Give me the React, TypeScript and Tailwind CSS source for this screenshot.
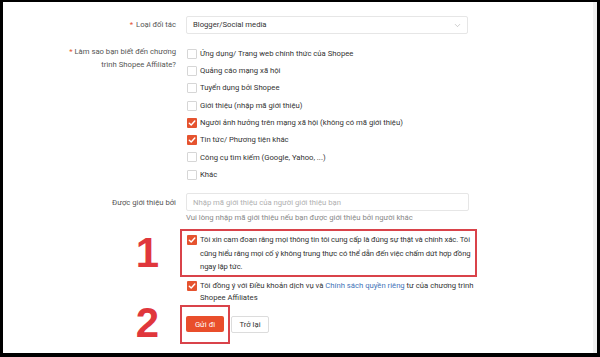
import { ChevronDown } from 'lucide-react'

const SOURCES: { label: string; checked: boolean }[] = [
  { label: 'Ứng dụng/ Trang web chính thức của Shopee', checked: false },
  { label: 'Quảng cáo mạng xã hội', checked: false },
  { label: 'Tuyển dụng bởi Shopee', checked: false },
  { label: 'Giới thiệu (nhập mã giới thiệu)', checked: false },
  { label: 'Người ảnh hưởng trên mạng xã hội (không có mã giới thiệu)', checked: true },
  { label: 'Tin tức/ Phương tiện khác', checked: true },
  { label: 'Công cụ tìm kiếm (Google, Yahoo, ...)', checked: false },
  { label: 'Khác', checked: false },
]

function Box({ checked }: { checked: boolean }) {
  if (checked) {
    return (
      <span className="flex h-[10px] w-[10px] shrink-0 items-center justify-center rounded-[1px] bg-[#e5532f]">
        <svg width="8" height="8" viewBox="0 0 8 8" fill="none">
          <path d="M1.3 4.2 3.2 6 6.8 2" stroke="white" strokeWidth="1.4" strokeLinecap="round" strokeLinejoin="round" />
        </svg>
      </span>
    )
  }
  return <span className="h-[10px] w-[10px] shrink-0 rounded-[1px] border border-[#d6d6d6] bg-white" />
}

export default function App() {
  return (
    <div className="flex h-[357px] w-[600px] bg-black pb-[4px] pl-[3px] pr-[3px] pt-[2px] font-['Roboto','Liberation_Sans',sans-serif] text-[7.7px] text-[#444]">
      <div className="flex-1 bg-white">
        <div className="mt-[14px] grid grid-cols-[173px_1fr] gap-x-[10px]">
          {/* loai doi tac */}
          <div className="flex h-[18px] items-center justify-end">
            <span className="text-[#e5532f]">*</span>
            <span className="ml-[3px] text-[#555]">Loại đối tác</span>
          </div>
          <div className="flex h-[18px] w-[282px] items-center justify-between rounded-[2px] border border-[#e6e6e6] pl-[6px] pr-[5px] text-[#333]">
            <span>Blogger/Social media</span>
            <ChevronDown size={9} strokeWidth={1.5} className="text-[#aaa]" />
          </div>

          {/* how did you know */}
          <div className="mt-[11px] text-right leading-[13px] text-[#555]">
            <span className="text-[#e5532f]">*</span> Làm sao bạn biết đến chương
            <br />
            trình Shopee Affiliate?
          </div>
          <div className="mt-[11px] flex flex-col">
            {SOURCES.map((s) => (
              <label key={s.label} className="flex h-[17.3px] items-center gap-[3px] pl-[1px] text-[#333]">
                <Box checked={s.checked} />
                <span>{s.label}</span>
              </label>
            ))}
          </div>

          {/* referral */}
          <div className="mt-[10px] flex h-[18px] items-center justify-end text-[#555]">Được giới thiệu bởi</div>
          <div className="mt-[10px] flex flex-col">
            <div className="flex h-[18px] w-[283px] items-center rounded-[2px] border border-[#e6e6e6] pl-[6px] text-[#b0b0b0]">
              Nhập mã giới thiệu của người giới thiệu bạn
            </div>
            <p className="mt-[1px] leading-[12px] text-[#888]">
              Vui lòng nhập mã giới thiệu nếu bạn được giới thiệu bởi người khác
            </p>
          </div>

          {/* confirm */}
          <div className="mt-[5px] flex justify-end pr-[17px] pt-[3px]">
            <span className="font-['Liberation_Sans',sans-serif] text-[42px] font-bold leading-[42px] text-[#e0373c]">1</span>
          </div>
          <div className="mt-[5px] -ml-[6px] flex w-[297px] gap-[3px] border-2 border-[#d9434a] pb-[1.5px] pl-[5px] pt-[2px] leading-[13.5px] text-[#333]">
            <span className="mt-[2px]">
              <Box checked />
            </span>
            <span className="whitespace-nowrap tracking-[-0.1px]">
              Tôi xin cam đoan rằng mọi thông tin tôi cung cấp là đúng sự thật và chính xác. Tôi
              <br />
              cũng hiểu rằng mọi cố ý không trung thực có thể dẫn đến việc chấm dứt hợp đồng
              <br />
              ngay lập tức.
            </span>
          </div>

          <div />
          <div className="mt-[3px] flex gap-[3px] pl-[1px] leading-[12px] text-[#333]">
            <span className="mt-[1px]">
              <Box checked />
            </span>
            <span className="whitespace-nowrap">
              Tôi đồng ý với Điều khoản dịch vụ và <span className="text-[#3f73b8]">Chính sách quyền riêng</span> tư
              của chương trình
              <br />
              Shopee Affiliates
            </span>
          </div>

          {/* actions */}
          <div className="-mt-[2px] flex justify-end pr-[17px]">
            <span className="font-['Liberation_Sans',sans-serif] text-[42px] font-bold leading-[42px] text-[#e0373c]">2</span>
          </div>
          <div className="-ml-[6px] flex items-center">
            <div className="flex h-[39px] w-[50px] items-center border-2 border-[#d9434a] pl-[4px]">
              <button type="button" className="h-[16px] w-[38px] rounded-[2px] bg-[#e94e2b] text-[7.7px] text-white">
                Gửi đi
              </button>
            </div>
            <button type="button" className="ml-[1px] h-[17px] w-[38px] rounded-[2px] border border-[#dcdcdc] bg-white text-[7.7px] text-[#333]">
              Trở lại
            </button>
          </div>
        </div>
      </div>
      <div className="w-[4px] bg-[#f0f0f0]" />
    </div>
  )
}
